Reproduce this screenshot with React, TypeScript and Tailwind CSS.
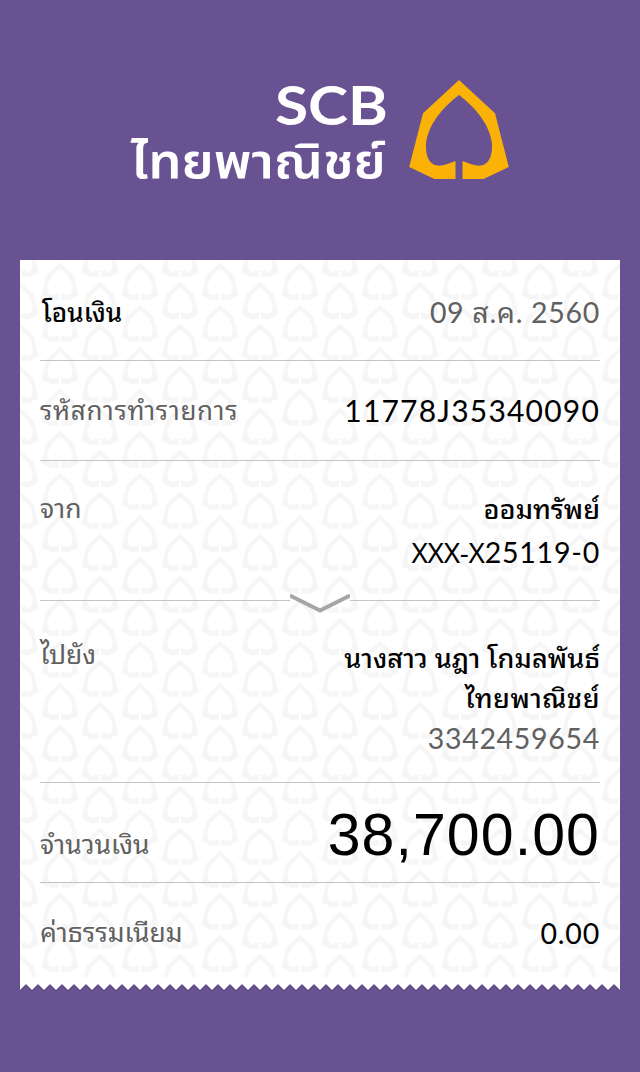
const EMBLEM =
  "M50 0L86 33.300L99.800 87L74.500 99H53.500V81C61 84 67 86.300 72 85.500C80 84 83.500 76 83 64C81 45 67 28 50 15C33 28 19 45 17 64C16.500 76 20 84 28 85.500C33 86.300 39 84 46.500 81V99H25.500L0.200 87L14 33.300Z";

function Pattern() {
  return (
    <svg className="absolute left-0 top-0" width="600" height="717" aria-hidden="true">
      <defs>
        <pattern id="leaf" x="0" y="-40" width="80" height="42" patternUnits="userSpaceOnUse">
          <g fill="#f6f6f6">
            <path transform="translate(21.200 0.500) scale(.376)" d={EMBLEM} />
            <path transform="translate(-18.800 19.500) scale(.376)" d={EMBLEM} />
            <path transform="translate(-18.800 -22.500) scale(.376)" d={EMBLEM} />
            <path transform="translate(61.200 19.500) scale(.376)" d={EMBLEM} />
            <path transform="translate(61.200 -22.500) scale(.376)" d={EMBLEM} />
          </g>
        </pattern>
      </defs>
      <rect width="600" height="717" fill="url(#leaf)" />
    </svg>
  );
}

const TEETH =
  "M0 0V6" + Array.from({ length: 50 }, (_, i) => `L${i * 12 + 6} 0L${i * 12 + 12} 6`).join("") + "V0Z";

export default function App() {
  return (
    <main className="flex h-[1072px] w-[640px] flex-col bg-[#685292] font-['Lato','Noto_Sans_Thai_Looped',sans-serif] text-black">
      <header className="flex h-[260px] items-start pl-[131px] pt-[80px]">
        <div className="flex w-[255px] flex-col items-end whitespace-nowrap text-white">
          <span className="-mr-0.5 h-[50px] origin-right scale-x-112 text-[54px] font-bold leading-[49px]">SCB</span>
          <span className="h-[52px] origin-right scale-x-110 font-['Noto_Sans_Thai'] text-[48px] font-semibold leading-[67px]">ไทยพาณิชย์</span>
        </div>
        <svg className="ml-[23px]" width="100" height="100" viewBox="0 0 100 100">
          <path d={EMBLEM} fill="#fbb206" />
        </svg>
      </header>
      <section className="relative mx-5 h-[724px] bg-white">
        <Pattern />
        <div className="relative flex flex-col px-5">
          <div className="flex h-[101px] items-center justify-between border-b border-[#c4c4c6] pt-1">
            <span className="pl-0.5 text-[26px] font-medium">โอนเงิน</span>
            <span className="text-[28.5px] tracking-[0.7px] text-[#606060]">09 ส.ค. 2560</span>
          </div>
          <div className="flex h-[100px] items-center justify-between border-b border-[#c4c4c6]">
            <span className="text-[26px] tracking-[0.7px] text-[#606060]">รหัสการทำรายการ</span>
            <span className="text-[30px] tracking-[1.200px]">11778J35340090</span>
          </div>
          <div className="relative flex h-[139px] justify-between pt-[26px]">
            <span className="text-[26.500px] leading-[43px] text-[#606060]">จาก</span>
            <div className="flex flex-col items-end">
              <span className="text-[27px] font-medium leading-[43px]">ออมทรัพย์</span>
              <span className="text-[28.5px] leading-[44px] tracking-[0.8px]">
                <span className="font-['Noto_Sans'] text-[28px] tracking-[-0.3px]">XXX-X</span>25119-0
              </span>
            </div>
            <svg className="absolute left-[250px] top-[130px]" width="60" height="24">
              <path d="M0 4.500L30 19.500L60 4.500" fill="none" stroke="#a6a6a6" strokeWidth="4" />
            </svg>
          </div>
          <div className="flex h-px justify-between">
            <div className="w-[250px] bg-[#c4c4c6]" />
            <div className="w-[250px] bg-[#c4c4c6]" />
          </div>
          <div className="flex h-[182px] justify-between border-b border-[#c4c4c6] pt-[37px]">
            <span className="text-[26.500px] leading-[32px] text-[#606060]">ไปยัง</span>
            <div className="flex flex-col items-end text-[27px] leading-[40px]">
              <span className="font-medium tracking-[0.1px]">นางสาว นฎา โกมลพันธ์</span>
              <span className="font-medium tracking-[0.5px]">ไทยพาณิชย์</span>
              <span className="text-[28.5px] tracking-[0.7px] text-[#606060]">3342459654</span>
            </div>
          </div>
          <div className="flex h-[100px] justify-between border-b border-[#c4c4c6]">
            <span className="pt-[41px] text-[26.500px] leading-[40px] text-[#606060]">จำนวนเงิน</span>
            <span className="font-['Liberation_Sans'] text-[59px] leading-[104px] tracking-[1.1px]">38,700.00</span>
          </div>
          <div className="flex h-[100px] items-center justify-between">
            <span className="text-[26.500px] text-[#606060]">ค่าธรรมเนียม</span>
            <span className="text-[28.5px] tracking-[0.8px]">0.00</span>
          </div>
        </div>
      </section>
      <svg className="ml-5" width="600" height="9">
        <path transform="translate(0 1.500)" d={TEETH} fill="#56437d" />
        <path d={TEETH} fill="#fff" />
      </svg>
    </main>
  );
}
